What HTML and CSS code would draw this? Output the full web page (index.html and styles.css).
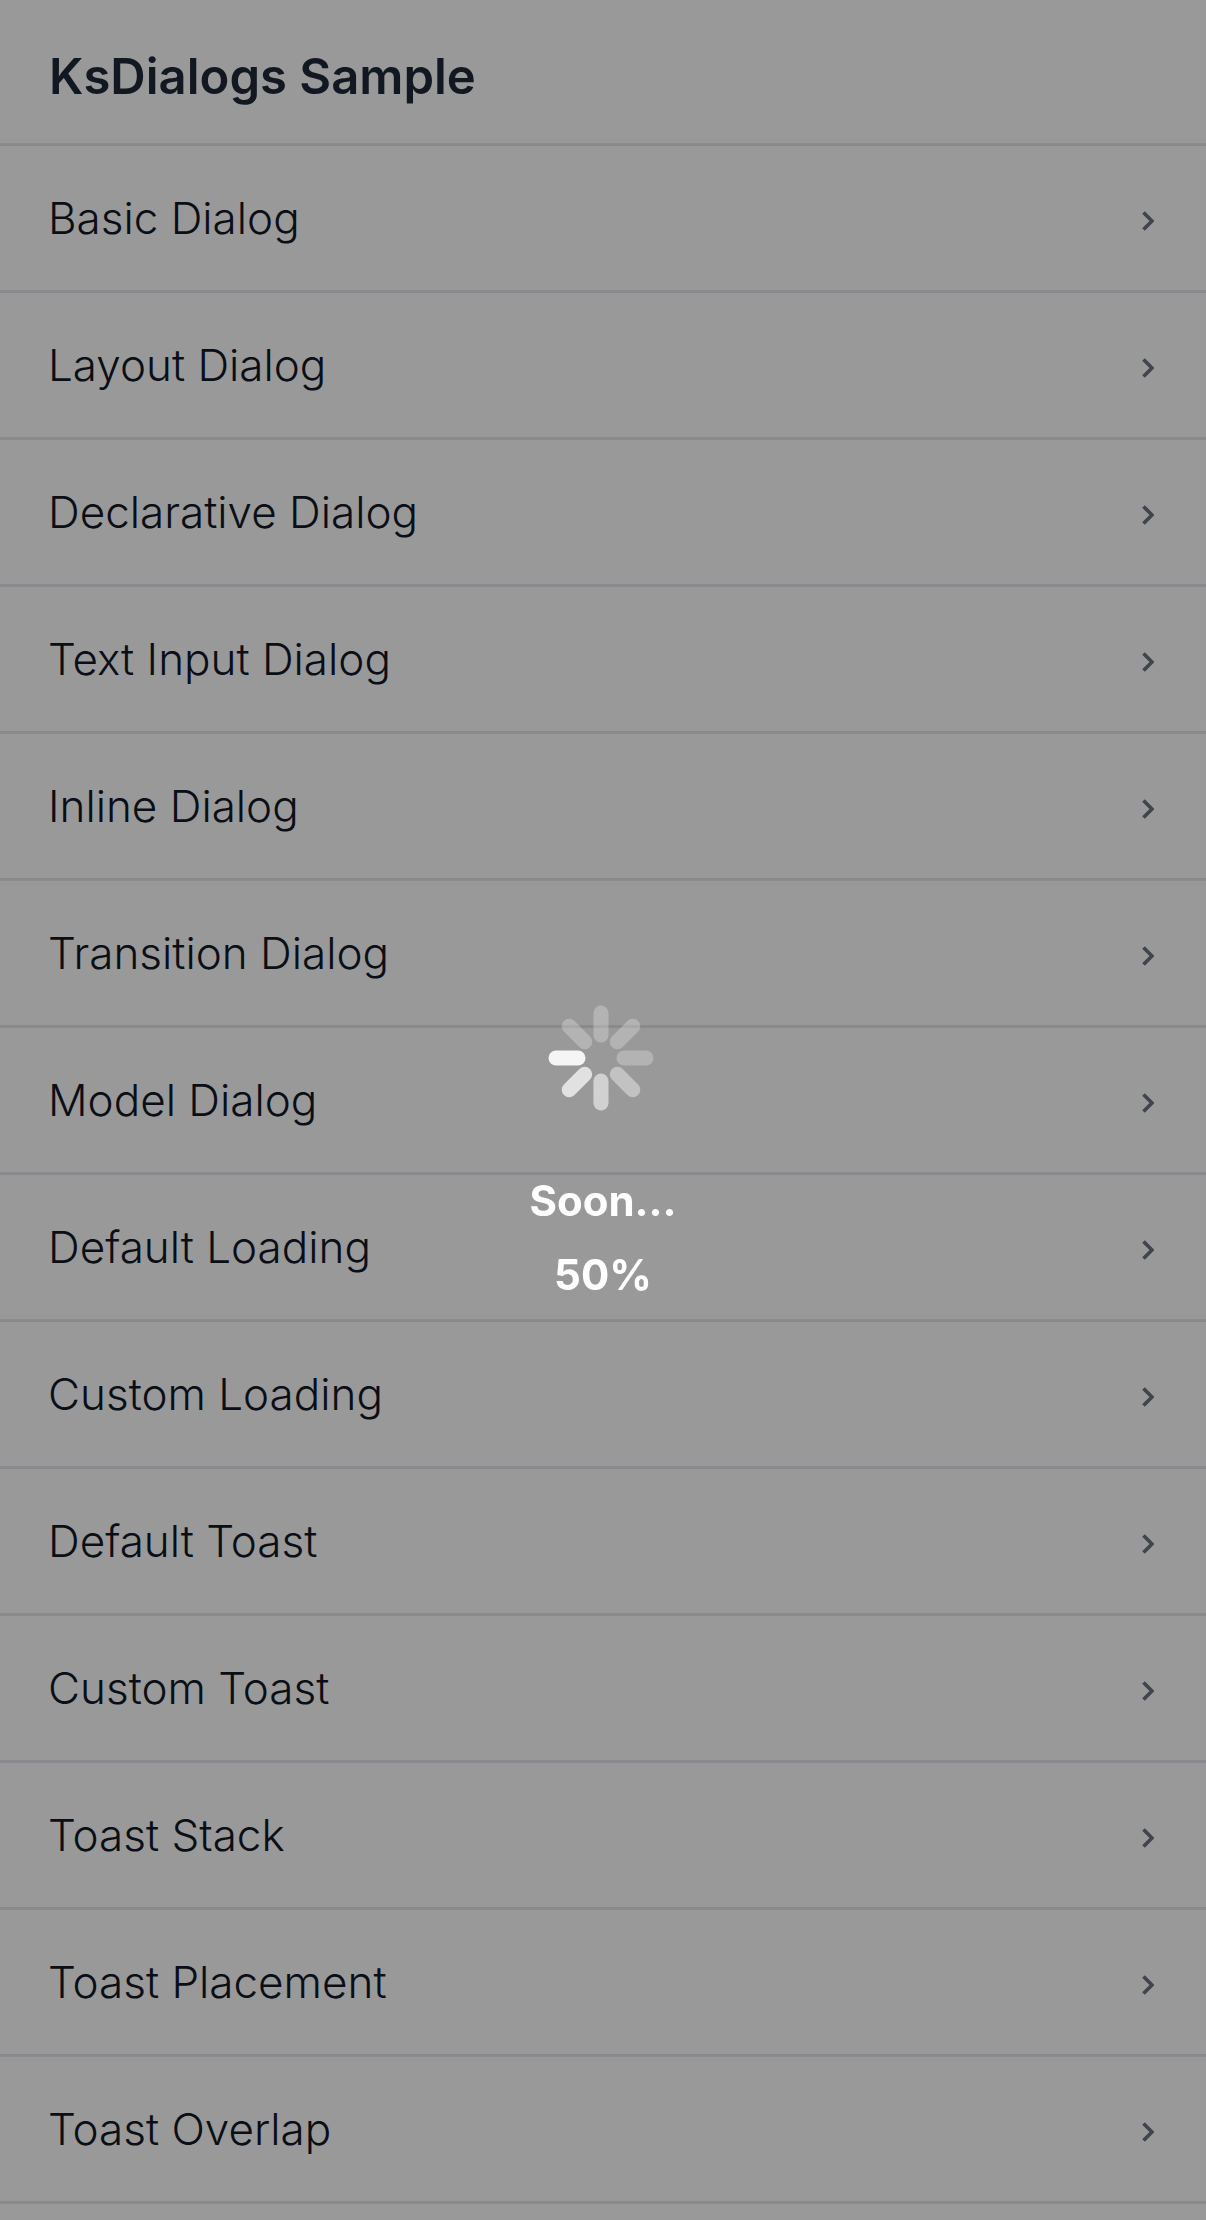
FILE: index.html
```html
<!DOCTYPE html>
<html lang="en">
<head>
    <meta charset="UTF-8">
    <meta name="viewport" content="width=device-width, initial-scale=1.0">
    <title>KsDialogs Sample</title>
    <link rel="stylesheet" href="styles.css">
</head>
<body>
    <header class="app-bar">KsDialogs Sample</header>
    <ul class="menu">
        <li class="menu-item"><span>Basic Dialog</span><svg class="chevron" viewBox="0 0 12 20"><path d="M1.5 1.5 L10 10 L1.5 18.5"/></svg></li>
        <li class="menu-item"><span>Layout Dialog</span><svg class="chevron" viewBox="0 0 12 20"><path d="M1.5 1.5 L10 10 L1.5 18.5"/></svg></li>
        <li class="menu-item"><span>Declarative Dialog</span><svg class="chevron" viewBox="0 0 12 20"><path d="M1.5 1.5 L10 10 L1.5 18.5"/></svg></li>
        <li class="menu-item"><span>Text Input Dialog</span><svg class="chevron" viewBox="0 0 12 20"><path d="M1.5 1.5 L10 10 L1.5 18.5"/></svg></li>
        <li class="menu-item"><span>Inline Dialog</span><svg class="chevron" viewBox="0 0 12 20"><path d="M1.5 1.5 L10 10 L1.5 18.5"/></svg></li>
        <li class="menu-item"><span>Transition Dialog</span><svg class="chevron" viewBox="0 0 12 20"><path d="M1.5 1.5 L10 10 L1.5 18.5"/></svg></li>
        <li class="menu-item"><span>Model Dialog</span><svg class="chevron" viewBox="0 0 12 20"><path d="M1.5 1.5 L10 10 L1.5 18.5"/></svg></li>
        <li class="menu-item"><span>Default Loading</span><svg class="chevron" viewBox="0 0 12 20"><path d="M1.5 1.5 L10 10 L1.5 18.5"/></svg></li>
        <li class="menu-item"><span>Custom Loading</span><svg class="chevron" viewBox="0 0 12 20"><path d="M1.5 1.5 L10 10 L1.5 18.5"/></svg></li>
        <li class="menu-item"><span>Default Toast</span><svg class="chevron" viewBox="0 0 12 20"><path d="M1.5 1.5 L10 10 L1.5 18.5"/></svg></li>
        <li class="menu-item"><span>Custom Toast</span><svg class="chevron" viewBox="0 0 12 20"><path d="M1.5 1.5 L10 10 L1.5 18.5"/></svg></li>
        <li class="menu-item"><span>Toast Stack</span><svg class="chevron" viewBox="0 0 12 20"><path d="M1.5 1.5 L10 10 L1.5 18.5"/></svg></li>
        <li class="menu-item"><span>Toast Placement</span><svg class="chevron" viewBox="0 0 12 20"><path d="M1.5 1.5 L10 10 L1.5 18.5"/></svg></li>
        <li class="menu-item"><span>Toast Overlap</span><svg class="chevron" viewBox="0 0 12 20"><path d="M1.5 1.5 L10 10 L1.5 18.5"/></svg></li>
    </ul>
    <div class="overlay">
        <div class="loading">
            <svg class="spinner" viewBox="0 0 106 106">
                <g stroke="#fff" stroke-width="15" stroke-linecap="round">
                    <line x1="53" y1="8" x2="53" y2="30" opacity="0.26" />
                    <line x1="84.8" y1="21.2" x2="69.3" y2="36.7" opacity="0.26" />
                    <line x1="98" y1="53" x2="76" y2="53" opacity="0.26" />
                    <line x1="84.8" y1="84.8" x2="69.3" y2="69.3" opacity="0.4" />
                    <line x1="53" y1="98" x2="53" y2="76" opacity="0.55" />
                    <line x1="21.2" y1="84.8" x2="36.7" y2="69.3" opacity="0.7" />
                    <line x1="8" y1="53" x2="30" y2="53" opacity="0.9" />
                    <line x1="21.2" y1="21.2" x2="36.7" y2="36.7" opacity="0.26" />
                </g>
            </svg>
            <div class="loading-text">Soon...</div>
            <div class="loading-text">50%</div>
        </div>
    </div>
</body>
</html>
```
FILE: styles.css
```css
html, body {
    margin: 0;
    padding: 0;
    height: 2220px;
    overflow: hidden;
}

body {
    font-family: 'Inter', sans-serif;
    background-color: #ffffff;
    color: #1f2937;
}

.app-bar {
    box-sizing: border-box;
    height: 146px;
    padding: 10px 0 0 49px;
    display: flex;
    align-items: center;
    font-size: 49px;
    font-weight: 600;
    border-bottom: 3px solid #e5e7eb;
}

.menu {
    list-style: none;
    margin: 0;
    padding: 0;
}

.menu-item {
    height: 144px;
    padding: 0 52px 0 48px;
    display: flex;
    align-items: center;
    justify-content: space-between;
    font-size: 44px;
    font-weight: 300;
    color: #111827;
    border-bottom: 3px solid #e5e7eb;
}

.chevron {
    width: 12px;
    height: 20px;
    margin-top: 5px;
    fill: none;
    stroke: #6b7280;
    stroke-width: 3.7;
}

.overlay {
    position: fixed;
    inset: 0;
    background-color: rgba(0, 0, 0, 0.4);
}

.loading {
    position: absolute;
    top: 1005px;
    left: 0;
    right: 0;
    display: flex;
    flex-direction: column;
    align-items: center;
}

.spinner {
    width: 106px;
    height: 106px;
    margin: 0 5px 53px 0;
}

.loading-text {
    color: #ffffff;
    font-size: 42px;
    font-weight: 700;
    line-height: 74px;
}
```
